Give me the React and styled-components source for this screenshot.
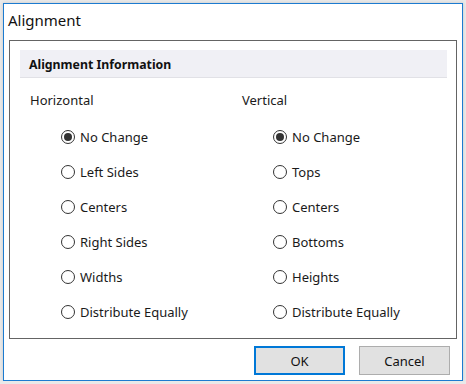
import React, { useState } from 'react';
import styled, { createGlobalStyle } from 'styled-components';

const GlobalStyle = createGlobalStyle`
  html, body {
    margin: 0;
    padding: 0;
    background: #e9e9e9;
  }
  body {
    font-family: "Noto Sans", "Open Sans", "Liberation Sans", sans-serif;
    color: #1a1a1a;
  }
`;

const horizontalOptions = ['No Change', 'Left Sides', 'Centers', 'Right Sides', 'Widths', 'Distribute Equally'];
const verticalOptions = ['No Change', 'Tops', 'Centers', 'Bottoms', 'Heights', 'Distribute Equally'];

const App = () => {
  const [horizontal, setHorizontal] = useState('No Change');
  const [vertical, setVertical] = useState('No Change');

  return (
    <>
      <GlobalStyle />
      <Window>
        <TitleBar>Alignment</TitleBar>
        <GroupBox>
          <GroupHeader>Alignment Information</GroupHeader>
          <Columns>
            <RadioColumn
              label="Horizontal"
              options={horizontalOptions}
              value={horizontal}
              onChange={setHorizontal}
            />
            <RadioColumn
              label="Vertical"
              options={verticalOptions}
              value={vertical}
              onChange={setVertical}
            />
          </Columns>
        </GroupBox>
        <ButtonRow>
          <Button $primary>OK</Button>
          <Button>Cancel</Button>
        </ButtonRow>
      </Window>
    </>
  );
};

const RadioColumn = ({ label, options, value, onChange }) => (
  <Column>
    <ColumnLabel>{label}</ColumnLabel>
    <RadioList>
      {options.map((opt) => (
        <RadioItem key={opt} onClick={() => onChange(opt)}>
          <RadioCircle $checked={value === opt} />
          <span>{opt}</span>
        </RadioItem>
      ))}
    </RadioList>
  </Column>
);

const Window = styled.div`
  margin: 3px 0 0 3px;
  width: 458px;
  height: 376px;
  background: #ffffff;
  border: 1px solid #1c7bd0;
  box-shadow: 0 0 3px rgba(0, 0, 0, 0.15);
  display: flex;
  flex-direction: column;
`;

const TitleBar = styled.div`
  height: 36px;
  padding: 6px 0 0 4px;
  box-sizing: border-box;
  font-size: 15px;
  color: #111;
`;

const GroupBox = styled.div`
  margin: 0 5px;
  height: 299px;
  box-sizing: border-box;
  border: 1px solid #646464;
  padding: 9px 9px 0 10px;
`;

const GroupHeader = styled.div`
  height: 28px;
  box-sizing: border-box;
  background: #f0f0f5;
  border-bottom: 1px solid #e1e1e6;
  padding: 6px 0 0 9px;
  font-size: 12.3px;
  font-weight: 700;
  color: #111;
`;

const Columns = styled.div`
  display: grid;
  grid-template-columns: 212px 212px;
  padding: 12px 0 0 10px;
`;

const Column = styled.div`
  display: flex;
  flex-direction: column;
`;

const ColumnLabel = styled.div`
  font-size: 13px;
  height: 21px;
  line-height: 21px;
`;

const RadioList = styled.div`
  display: flex;
  flex-direction: column;
  gap: 15px;
  padding: 16px 0 0 31px;
`;

const RadioItem = styled.label`
  display: flex;
  align-items: center;
  gap: 5px;
  height: 20px;
  font-size: 13px;
  cursor: default;
`;

const RadioCircle = styled.span`
  width: 14px;
  height: 14px;
  box-sizing: border-box;
  border-radius: 50%;
  border: 1px solid #333;
  display: flex;
  align-items: center;
  justify-content: center;
  &::after {
    content: '';
    display: ${({ $checked }) => ($checked ? 'block' : 'none')};
    width: 8px;
    height: 8px;
    border-radius: 50%;
    background: #333;
  }
`;

const ButtonRow = styled.div`
  display: flex;
  justify-content: flex-end;
  gap: 14px;
  padding: 7px 12px 0 0;
`;

const Button = styled.button`
  width: 91px;
  height: 29px;
  box-sizing: border-box;
  background: #e1e1e1;
  border: ${({ $primary }) => ($primary ? '2px solid #0078d7' : '1px solid #adadad')};
  font-family: inherit;
  font-size: 13px;
  color: #111;
  padding: 0;
`;

export default App;
